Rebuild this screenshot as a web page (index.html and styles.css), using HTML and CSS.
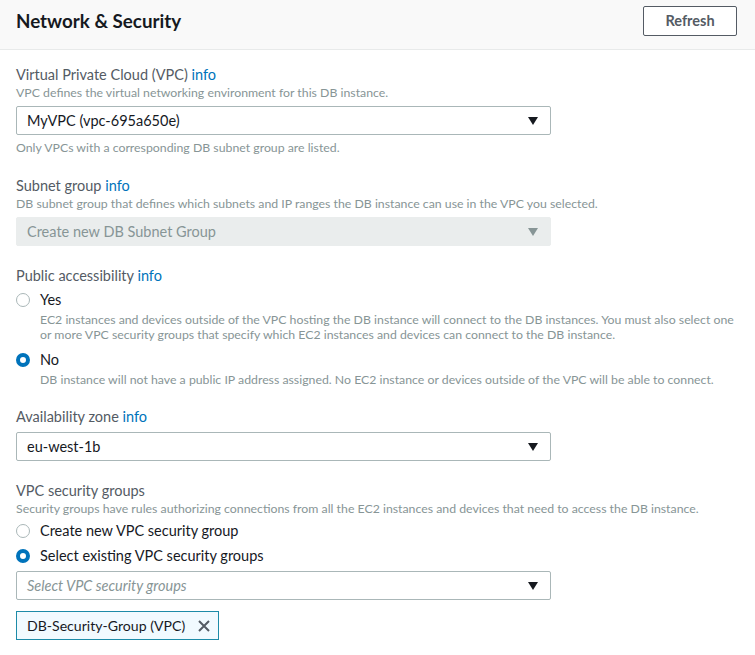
FILE: index.html
```html
<!DOCTYPE html>
<html>
<head>
<meta charset="utf-8">
<link rel="stylesheet" href="styles.css">
</head>
<body>
<div class="panel">
  <div class="header">
    <h2 class="title">Network &amp; Security</h2>
    <button class="btn">Refresh</button>
  </div>
  <div class="body">
    <div class="field">
      <div class="label">Virtual Private Cloud (VPC) <span class="info">info</span></div>
      <div class="desc">VPC defines the virtual networking environment for this DB instance.</div>
      <div class="select"><span>MyVPC (vpc-695a650e)</span><span class="caret"></span></div>
      <div class="hint">Only VPCs with a corresponding DB subnet group are listed.</div>
    </div>
    <div class="field">
      <div class="label">Subnet group <span class="info">info</span></div>
      <div class="desc">DB subnet group that defines which subnets and IP ranges the DB instance can use in the VPC you selected.</div>
      <div class="select disabled"><span>Create new DB Subnet Group</span><span class="caret"></span></div>
    </div>
    <div class="field">
      <div class="label">Public accessibility <span class="info">info</span></div>
      <div class="radio-opt first">
        <span class="radio"></span>
        <div class="opt-body">
          <div class="opt-label">Yes</div>
          <div class="opt-desc">EC2 instances and devices outside of the VPC hosting the DB instance will connect to the DB instances. You must also select one or more VPC security groups that specify which EC2 instances and devices can connect to the DB instance.</div>
        </div>
      </div>
      <div class="radio-opt second">
        <span class="radio checked"></span>
        <div class="opt-body">
          <div class="opt-label">No</div>
          <div class="opt-desc">DB instance will not have a public IP address assigned. No EC2 instance or devices outside of the VPC will be able to connect.</div>
        </div>
      </div>
    </div>
    <div class="field">
      <div class="label lbl-tight">Availability zone <span class="info">info</span></div>
      <div class="select"><span>eu-west-1b</span><span class="caret"></span></div>
    </div>
    <div class="field">
      <div class="label">VPC security groups</div>
      <div class="desc tight">Security groups have rules authorizing connections from all the EC2 instances and devices that need to access the DB instance.</div>
      <div class="radio-opt small">
        <span class="radio"></span>
        <div class="opt-label">Create new VPC security group</div>
      </div>
      <div class="radio-opt small">
        <span class="radio checked"></span>
        <div class="opt-label">Select existing VPC security groups</div>
      </div>
      <div class="select sg"><span class="placeholder">Select VPC security groups</span><span class="caret"></span></div>
      <div class="token">DB-Security-Group (VPC)
        <svg class="x" width="12" height="12" viewBox="0 0 12 12"><path d="M1 1L11 11M11 1L1 11" stroke="#545b64" stroke-width="2" fill="none"/></svg>
      </div>
    </div>
  </div>
</div>
</body>
</html>
```
FILE: styles.css
```css
html, body { margin: 0; padding: 0; background: #fff; }
body { font-family: Lato, "Open Sans", sans-serif; color: #16191f; }
.panel { width: 755px; }
.header {
  height: 50px; box-sizing: border-box;
  background: #f9f9f9; border-bottom: 1px solid #e8eaea;
  display: flex; align-items: center; justify-content: space-between;
  padding: 0 18px 0 16px;
}
.title { margin: 0; font-size: 18.8px; font-weight: 700; color: #16191f; position: relative; top: -4px; }
.btn {
  font-family: inherit; font-size: 14.5px; font-weight: 700; color: #545b64;
  background: #fff; border: 1px solid #545b64; border-radius: 2px;
  width: 94px; height: 30px; position: relative; top: -4px;
}
.body { padding: 15px 12px 0 16px; }
.field { margin-bottom: 20px; }
.label { font-size: 14.5px; color: #545b64; line-height: 20px; }
.info { color: #0073bb; }
.desc { font-size: 12.3px; color: #879596; line-height: 16px; margin-bottom: 5px; }
.desc.tight { margin-bottom: 4px; }
.hint { font-size: 12.3px; color: #879596; line-height: 16px; margin-top: 5px; }
.lbl-tight { margin-bottom: 5px; }
.select {
  width: 535px; height: 29px; box-sizing: border-box;
  border: 1px solid #aab7b8; border-radius: 2px;
  display: flex; align-items: center; justify-content: space-between;
  padding: 0 12px 0 10px; font-size: 14.5px; color: #16191f;
}
.select.sg { margin-top: 5px; }
.select.disabled { background: #eaeded; border-color: #eaeded; color: #879596; }
.caret { width: 0; height: 0; border-left: 5.5px solid transparent; border-right: 5.5px solid transparent; border-top: 8px solid #16191f; }
.select.disabled .caret { border-top-color: #879596; }
.placeholder { font-style: italic; color: #879596; }
.radio-opt { display: flex; align-items: flex-start; }
.radio-opt.first { margin-top: 4px; }
.radio-opt.second { margin-top: 8px; }
.radio-opt.small { margin-top: 4px; }
.radio-opt.small + .radio-opt.small { margin-top: 5px; }
.radio {
  width: 14px; height: 14px; box-sizing: border-box; border-radius: 50%;
  border: 1px solid #aab7b8; background: #fff; margin-top: 3px; margin-right: 10px; flex: none;
}
.radio.checked { border: 4px solid #0073bb; }
.opt-label { font-size: 14.5px; line-height: 20px; color: #16191f; }
.opt-desc { font-size: 12.3px; line-height: 15px; color: #879596; margin-top: 2px; max-width: 697px; }
.token {
  display: inline-flex; align-items: center; margin-top: 11px;
  height: 29px; box-sizing: border-box; padding: 0 8px 0 10px;
  border: 1px solid #1d8ba8; background: #f1faff; font-size: 14.1px; color: #16191f;
}
.x { margin-left: 13px; }
```
